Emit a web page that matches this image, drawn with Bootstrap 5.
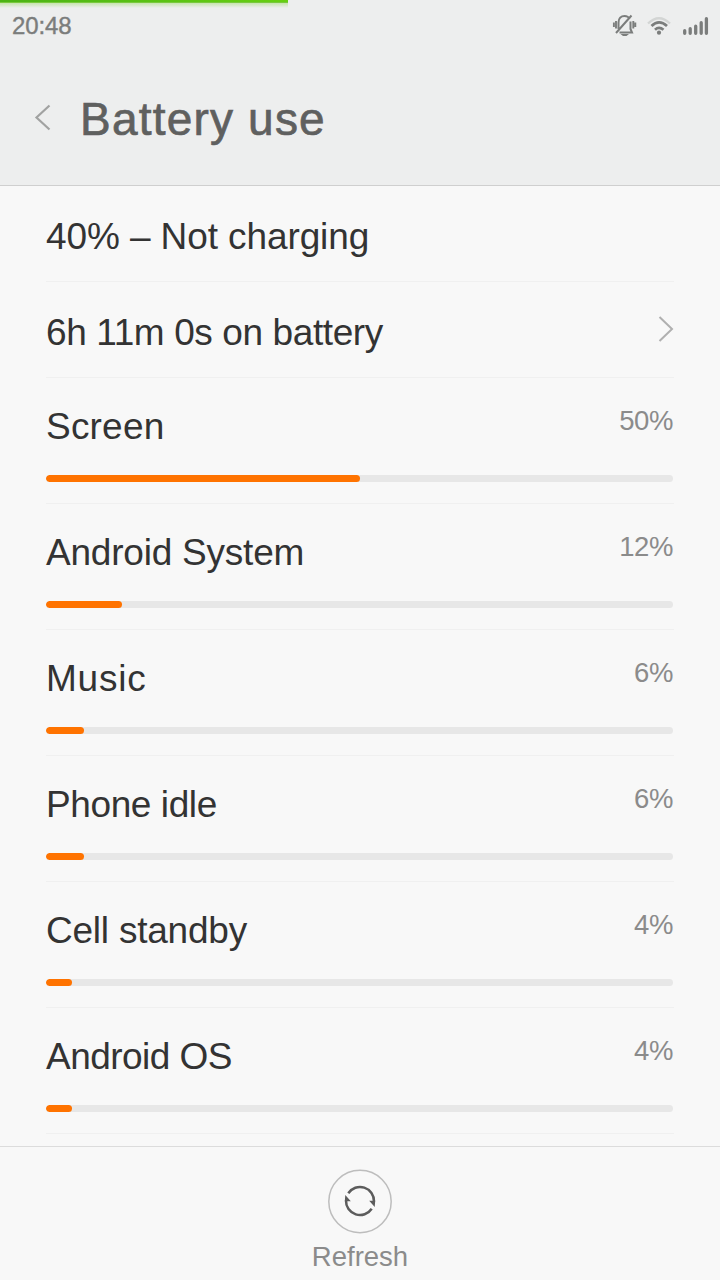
<!DOCTYPE html>
<html lang="en">
<head>
<meta charset="utf-8">
<meta name="viewport" content="width=device-width, initial-scale=1">
<title>Battery use</title>
<link href="https://cdn.jsdelivr.net/npm/bootstrap@5.3.0/dist/css/bootstrap.min.css" rel="stylesheet">
<style>
  body { font-family: "Liberation Sans", Arial, sans-serif; background: #f8f8f8; color: #333; height: 1280px; overflow: hidden; }
  .screen-head { height: 186px; background: #edeeee; border-bottom: 1px solid #cfcfcf; }
  .charge-strip { top: 0; left: 0; width: 40%; height: 8px;
    background: linear-gradient(to bottom, transparent 3px, #edeeee 8px), linear-gradient(to right, rgba(109,205,22,.3), rgba(109,205,22,.3)); }
  .charge-strip::before { content: ""; display: block; height: 3px; background: linear-gradient(to right, #4bb314, #66cf11); border-bottom: 1px solid #78c93c; }
  .status-line { height: 50px; padding: 1px 11px 0 12px; }
  .clock-text { font-size: 24px; line-height: 50px; color: #7b7d7c; letter-spacing: -.1px; -webkit-text-stroke: .4px #7b7d7c; }
  .title-line { height: 135px; padding-left: 34px; }
  .title-text { font-size: 46px; line-height: 54px; margin: 3px 0 0 29px; color: #5f605f; letter-spacing: 1.2px; font-weight: 400; -webkit-text-stroke: .7px #5f605f; }
  .usage-list { height: 960px; padding: 0 46px; overflow: hidden; }
  .info-row { height: 96px; border-bottom: 1px solid #f0f0f0; font-size: 37px; line-height: 44px; padding-top: 7px; }
  .usage-row { height: 126px; border-bottom: 1px solid #f0f0f0; padding-top: 27px; }
  .usage-name { font-size: 37px; line-height: 44px; }
  .usage-share { font-size: 27.5px; line-height: 34px; color: #8b8b8b; margin: -1px 1px 0 0; letter-spacing: -.4px; }
  .usage-row .progress { height: 7px; margin-top: 26px; background: #e7e7e7; border-radius: 4px; margin-right: 1px; }
  .usage-row .progress-bar { background: #ff7300; border-radius: 4px; }
  .screen-foot { height: 134px; border-top: 1px solid #dcdcdc; padding-top: 21px; }
  .foot-label { font-size: 27.5px; line-height: 34px; color: #8b8b8b; margin-top: 6px; }
  .sp-a { letter-spacing: .2px; } .sp-b { letter-spacing: .8px; } .sp-c { letter-spacing: -.22px; } .sp-d { letter-spacing: -.4px; } .sp-e { letter-spacing: -.55px; } .sp-f { letter-spacing: -.1px; }
</style>
</head>
<body class="d-flex flex-column">
<header class="screen-head position-relative flex-shrink-0">
  <div class="charge-strip position-absolute"></div>
  <div class="status-line d-flex justify-content-between align-items-center">
    <span class="clock-text">20:48</span>
    <svg width="98" height="26" viewBox="611 12 98 26" fill="none" stroke="#7b7d7c" stroke-width="2">
      <path d="M618.500 28V21.500c0-4 2.500-6.500 6-6.500 2.500 0 4.300 1.200 5.200 3M630.500 20.500v7.500l1.500 3.500H619.500M616 32L631.500 14.500"/>
      <path d="M620.500 33h8.500l-2.500 2h-3.500z" fill="#7b7d7c" stroke="none"/>
      <path d="M616 20v7.500M633.300 20v7.500M613.900 21.500v4.500M635.300 21.500v4.500" stroke-width="1.900"/>
      <path d="M648 22.500Q659 12 670 22.500" stroke="#d3d5d4" stroke-width="2.400"/>
      <path d="M651.500 25Q659 17.600 667 25M655 28.800Q659 25 663.500 28.800" stroke-width="2.700"/>
      <circle cx="659" cy="31.700" r="2.100" fill="#7b7d7c" stroke="none"/>
      <path d="M684.700 29.700v2.600M690.200 27.700v4.600M695.700 25.200v7.100M701.200 21.700v10.600M706.400 17.700v14.600" stroke-width="3.300" stroke-linecap="round"/>
    </svg>
  </div>
  <div class="title-line d-flex align-items-center">
    <svg width="17" height="28" viewBox="0 0 17 28" fill="none" stroke="#a1a2a1" stroke-width="2.200"><path d="M15.500 1.500L2.500 13.500l13 12"/></svg>
    <h1 class="title-text">Battery use</h1>
  </div>
</header>
<main class="usage-list flex-shrink-0">
  <div class="info-row d-flex align-items-center"><span class="sp-f">40% – Not charging</span></div>
  <div class="info-row d-flex align-items-center justify-content-between"><span class="sp-d">6h 11m 0s on battery</span>
    <svg width="16" height="28" viewBox="0 0 16 28" fill="none" stroke="#b0b0b0" stroke-width="2" class="mb-2"><path d="M1.500 2L14 14 1.500 26"/></svg>
  </div>
  <div class="usage-row"><div class="d-flex justify-content-between"><span class="usage-name sp-a">Screen</span><span class="usage-share">50%</span></div><div class="progress"><div class="progress-bar" style="width:50%"></div></div></div>
  <div class="usage-row"><div class="d-flex justify-content-between"><span class="usage-name sp-c">Android System</span><span class="usage-share">12%</span></div><div class="progress"><div class="progress-bar" style="width:12.1%"></div></div></div>
  <div class="usage-row"><div class="d-flex justify-content-between"><span class="usage-name sp-b">Music</span><span class="usage-share">6%</span></div><div class="progress"><div class="progress-bar" style="width:6.1%"></div></div></div>
  <div class="usage-row"><div class="d-flex justify-content-between"><span class="usage-name sp-d">Phone idle</span><span class="usage-share">6%</span></div><div class="progress"><div class="progress-bar" style="width:6.1%"></div></div></div>
  <div class="usage-row"><div class="d-flex justify-content-between"><span class="usage-name sp-c">Cell standby</span><span class="usage-share">4%</span></div><div class="progress"><div class="progress-bar" style="width:4.150%"></div></div></div>
  <div class="usage-row"><div class="d-flex justify-content-between"><span class="usage-name sp-e">Android OS</span><span class="usage-share">4%</span></div><div class="progress"><div class="progress-bar" style="width:4.150%"></div></div></div>
</main>
<footer class="screen-foot d-flex flex-column align-items-center flex-shrink-0">
  <svg width="66" height="66" viewBox="0 0 66 66" fill="none" class="flex-shrink-0">
    <circle cx="33" cy="33.500" r="31.200" stroke="#bdbdbd" stroke-width="1.500"/>
    <g stroke="#5c5c5c" stroke-width="2.500"><path d="M21.300 25.300A14 14 0 0 1 47 33.500M44.700 40.700A14 14 0 0 1 19 32.500"/></g>
    <path d="M18.300 27l5.500 6.300h-6zM47.700 39l.5-6.300h-6z" fill="#5c5c5c"/>
  </svg>
  <span class="foot-label">Refresh</span>
</footer>
<script src="https://cdn.jsdelivr.net/npm/bootstrap@5.3.0/dist/js/bootstrap.bundle.min.js"></script>
</body>
</html>
